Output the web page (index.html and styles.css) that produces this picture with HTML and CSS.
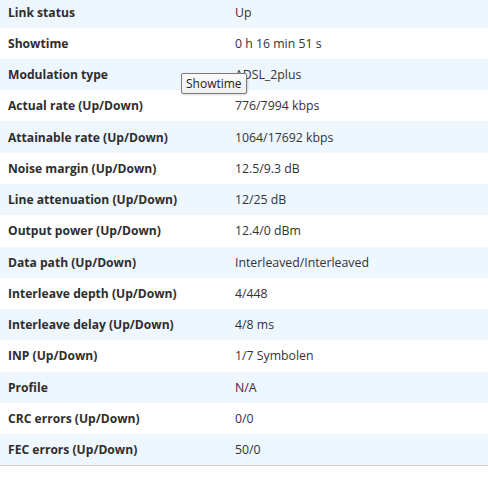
FILE: index.html
```html
<!DOCTYPE html>
<html>
<head>
<meta charset="utf-8">
<link rel="stylesheet" href="styles.css">
</head>
<body>
<div class="page">
  <div class="status">
    <div class="row alt"><div class="label">Link status</div><div class="value">Up</div></div>
    <div class="row"><div class="label">Showtime</div><div class="value">0 h 16 min 51 s</div></div>
    <div class="row alt"><div class="label">Modulation type</div><div class="value">ADSL_2plus</div></div>
    <div class="row"><div class="label">Actual rate (Up/Down)</div><div class="value">776/7994 kbps</div></div>
    <div class="row alt"><div class="label">Attainable rate (Up/Down)</div><div class="value">1064/17692 kbps</div></div>
    <div class="row"><div class="label">Noise margin (Up/Down)</div><div class="value">12.5/9.3 dB</div></div>
    <div class="row alt"><div class="label">Line attenuation (Up/Down)</div><div class="value">12/25 dB</div></div>
    <div class="row"><div class="label">Output power (Up/Down)</div><div class="value">12.4/0 dBm</div></div>
    <div class="row alt"><div class="label">Data path (Up/Down)</div><div class="value">Interleaved/Interleaved</div></div>
    <div class="row"><div class="label">Interleave depth (Up/Down)</div><div class="value">4/448</div></div>
    <div class="row alt"><div class="label">Interleave delay (Up/Down)</div><div class="value">4/8 ms</div></div>
    <div class="row"><div class="label">INP (Up/Down)</div><div class="value">1/7 Symbolen</div></div>
    <div class="row alt"><div class="label">Profile</div><div class="value">N/A</div></div>
    <div class="row"><div class="label">CRC errors (Up/Down)</div><div class="value">0/0</div></div>
    <div class="row alt last"><div class="label">FEC errors (Up/Down)</div><div class="value">50/0</div></div>
  </div>
  <div class="tooltip">Showtime</div>
</div>
</body>
</html>
```
FILE: styles.css
```css
html, body {
  margin: 0;
  padding: 0;
  background: #ffffff;
}
.page {
  position: relative;
  width: 488px;
  height: 481px;
  overflow: hidden;
  font-family: "Open Sans", "Noto Sans", sans-serif;
  font-size: 12.3px;
  color: #333333;
}
.status {
  margin-top: -3.6px;
}
.row {
  display: grid;
  grid-template-columns: 235px 1fr;
  height: 31.27px;
  align-items: center;
  background: #ffffff;
}
.row.alt {
  background: #eef6fe;
}
.row.last {
  border-bottom: 1px solid #cfcfcf;
}
.label {
  padding-left: 8px;
  font-weight: 700;
  font-size: 12.1px;
  color: #2e2e2e;
}
.value {
  color: #333333;
}
.tooltip {
  position: absolute;
  left: 181px;
  top: 73px;
  height: 19px;
  padding: 0 4px;
  display: flex;
  align-items: center;
  border: 1px solid #7a7a7a;
  border-radius: 2px;
  background: linear-gradient(#fbfbfb, #efefef);
  box-shadow: 1px 1px 2px rgba(0,0,0,0.15);
  font-size: 12px;
  color: #222222;
}
```
